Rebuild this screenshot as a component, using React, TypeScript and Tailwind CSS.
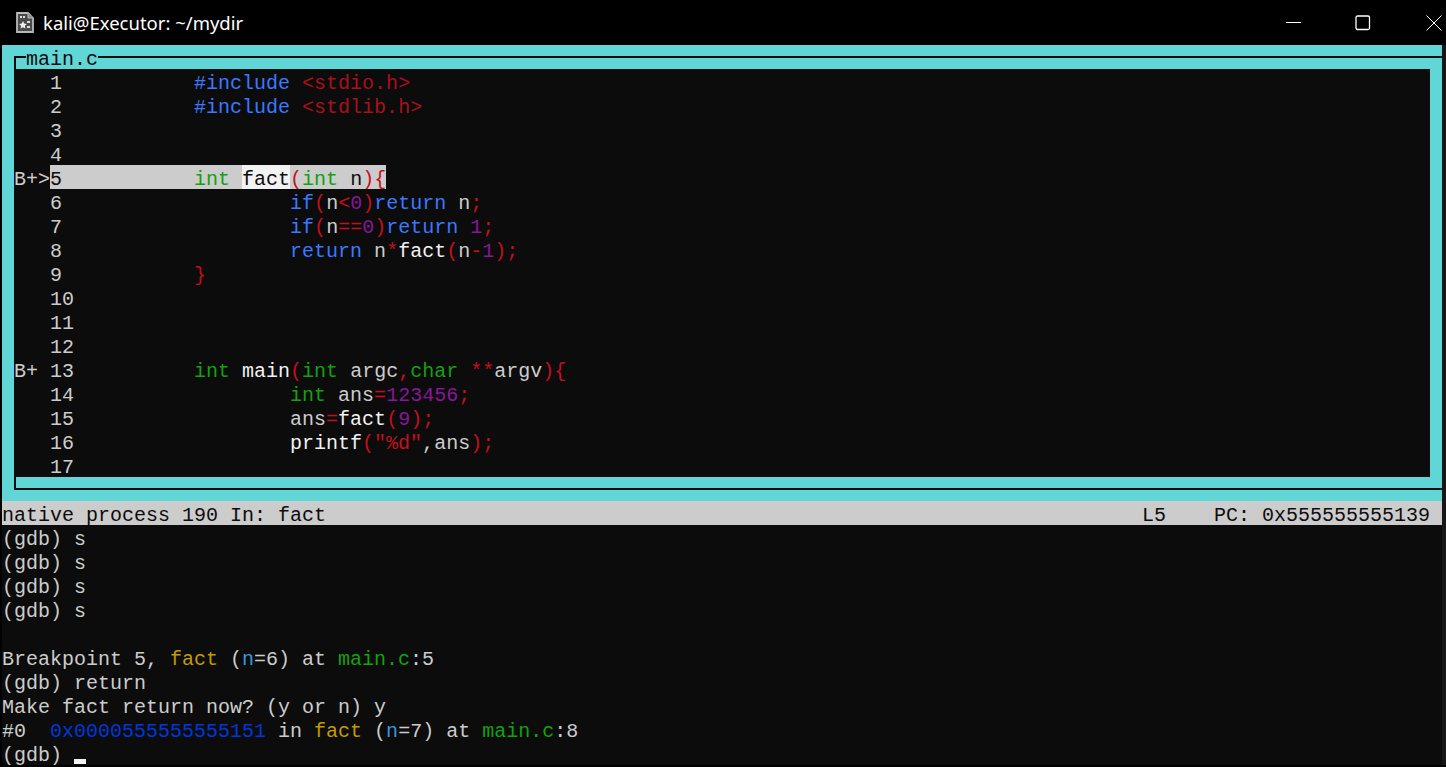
import React from 'react';

type Seg = [string, string];

const W = 'text-[#cccccc]';
const BRIGHT = 'text-[#f2f2f2]';
const BLUE = 'text-[#3b78ff]';
const RED = 'text-[#c50f1f]';
const DRED = 'text-[#a8101c]';
const GREEN = 'text-[#13a10e]';
const PURPLE = 'text-[#881798]';

const I1 = '          ';
const I2 = '                  ';

function Line({ prefix = '   ', num, segs = [] }: { prefix?: string; num: number; segs?: Seg[] }) {
  return (
    <div className="h-[24px] pt-[6px] leading-[18px] whitespace-pre">
      <span className={W}>{prefix}{num}{num < 10 ? ' ' : ''}</span>
      {segs.map((s, i) => (
        <span key={i} className={s[0]}>{s[1]}</span>
      ))}
    </div>
  );
}

function GdbLine({ segs }: { segs: Seg[] }) {
  return (
    <div className="h-[24px] pt-[6px] leading-[18px] whitespace-pre">
      {segs.map((s, i) => (
        <span key={i} className={s[0]}>{s[1]}</span>
      ))}
    </div>
  );
}

export default function App() {
  return (
    <div className="w-[1446px] h-[767px] bg-black flex flex-col">
      {/* title bar */}
      <div className="h-[45px] shrink-0 bg-black flex items-center pl-[16px] text-white font-['Noto_Sans',sans-serif]">
        <svg width="18" height="21" viewBox="0 0 18 21" className="shrink-0 mt-[-1px]">
          <path d="M1 1h11l5 5v14H1z" fill="#4a4a4a" stroke="#b8b8b8" strokeWidth="1.8" />
          <path d="M12 1v5h5" fill="#8a8a8a" stroke="#b8b8b8" strokeWidth="1" />
          <rect x="4" y="4" width="2" height="2" fill="#ddd" />
          <rect x="7" y="4" width="2" height="2" fill="#ddd" />
          <rect x="11" y="9" width="3" height="2" fill="#ddd" />
          <rect x="11" y="14" width="3" height="2" fill="#ddd" />
          <path d="M7 9l1.2 2.6 2.8.3-2.1 1.9.6 2.8L7 15.2l-2.5 1.4.6-2.8L3 11.9l2.8-.3z" fill="#eee" />
        </svg>
        <span className="ml-[9px] text-[18.5px] leading-[24px]">kali@Executor: ~/mydir</span>
        <div className="ml-auto flex items-center h-full">
          <svg width="16" height="16" viewBox="0 0 16 16" className="mr-[53px]">
            <path d="M0 7.5h15" stroke="#fff" strokeWidth="1" />
          </svg>
          <svg width="16" height="16" viewBox="0 0 16 16" className="mr-[55px]">
            <rect x="1" y="1" width="13.5" height="13.5" rx="1.5" fill="none" stroke="#fff" strokeWidth="1.3" />
          </svg>
          <svg width="16" height="16" viewBox="0 0 16 16" className="mr-[4px]">
            <path d="M.5.5l15 15M15.5.5l-15 15" stroke="#fff" strokeWidth="1" />
          </svg>
        </div>
      </div>

      {/* terminal */}
      <div className="h-[720px] shrink-0 flex bg-[#0c0c0c] rounded-bl-[8px] font-['Liberation_Mono',monospace] text-[20px]">
        <div className="w-[2px] bg-black shrink-0 rounded-bl-[8px]" />
        <div className="w-[1440px] shrink-0 flex flex-col">
          {/* tui box */}
          <div className="bg-[#61d6d6] h-[456px] flex flex-col">
            <div className="h-[24px] shrink-0 relative">
              <div className="absolute left-[12px] right-0 top-[11px] h-[2px] bg-[#0c0c0c]" />
              <div className="absolute left-[12px] top-[11px] bottom-0 w-[2px] bg-[#0c0c0c]" />
              <span className="absolute left-[24px] top-0 pt-[6px] leading-[18px] bg-[#61d6d6] text-[#0c0c0c] h-[24px] whitespace-pre">main.c</span>
            </div>
            <div className="ml-[12px] mr-[12px] h-[408px] bg-[#0c0c0c]">
              <Line num={1} segs={[[W, I1], [BLUE, '#include '], [DRED, '<stdio.h>']]} />
              <Line num={2} segs={[[W, I1], [BLUE, '#include '], [DRED, '<stdlib.h>']]} />
              <Line num={3} />
              <Line num={4} />
              <div className="h-[24px] flex whitespace-pre">
                <span className={`${W} h-[24px] pt-[6px] leading-[18px]`}>B+&gt;</span>
                <div className="h-[24px] pt-[6px] leading-[18px] bg-[#cccccc]">
                  <span className="text-[#0c0c0c]">5{'           '}</span>
                  <span className={GREEN}>int </span>
                </div>
                <span className="h-[24px] pt-[6px] leading-[18px] bg-[#f2f2f2] text-[#0c0c0c]">fact</span>
                <div className="h-[24px] pt-[6px] leading-[18px] bg-[#cccccc]">
                  <span className={RED}>(</span>
                  <span className={GREEN}>int </span>
                  <span className="text-[#0c0c0c]">n</span>
                  <span className={RED}>){'{'}</span>
                </div>
              </div>
              <Line num={6} segs={[[W, I2], [BLUE, 'if'], [RED, '('], [W, 'n'], [RED, '<'], [PURPLE, '0'], [RED, ')'], [BLUE, 'return '], [W, 'n'], [RED, ';']]} />
              <Line num={7} segs={[[W, I2], [BLUE, 'if'], [RED, '('], [W, 'n'], [RED, '=='], [PURPLE, '0'], [RED, ')'], [BLUE, 'return '], [PURPLE, '1'], [RED, ';']]} />
              <Line num={8} segs={[[W, I2], [BLUE, 'return '], [W, 'n'], [RED, '*'], [BRIGHT, 'fact'], [RED, '('], [W, 'n'], [RED, '-'], [PURPLE, '1'], [RED, ');']]} />
              <Line num={9} segs={[[W, I1], [RED, '}']]} />
              <Line num={10} />
              <Line num={11} />
              <Line num={12} />
              <Line prefix="B+ " num={13} segs={[[W, I1], [GREEN, 'int '], [BRIGHT, 'main'], [RED, '('], [GREEN, 'int '], [W, 'argc'], [RED, ','], [GREEN, 'char '], [RED, '**'], [W, 'argv'], [RED, '){']]} />
              <Line num={14} segs={[[W, I2], [GREEN, 'int '], [W, 'ans'], [RED, '='], [PURPLE, '123456'], [RED, ';']]} />
              <Line num={15} segs={[[W, I2], [W, 'ans'], [RED, '='], [BRIGHT, 'fact'], [RED, '('], [PURPLE, '9'], [RED, ');']]} />
              <Line num={16} segs={[[W, I2], [BRIGHT, 'printf'], [RED, '("%d"'], [W, ','], [W, 'ans'], [RED, ');']]} />
              <Line num={17} />
            </div>
            <div className="h-[11px] shrink-0 ml-[12px] border-l-2 border-[#0c0c0c]" />
            <div className="h-[2px] shrink-0 bg-[#0c0c0c] ml-[12px]" />
            <div className="h-[11px] shrink-0" />
          </div>

          {/* status line */}
          <div className="h-[24px] shrink-0 bg-[#cccccc] text-[#0c0c0c] pt-[6px] leading-[18px] flex justify-between whitespace-pre pr-[12px]">
            <span>native process 190 In: fact</span>
            <span>L5    PC: 0x555555555139</span>
          </div>

          {/* gdb command window */}
          <div className="flex-1">
            <GdbLine segs={[[W, '(gdb) s']]} />
            <GdbLine segs={[[W, '(gdb) s']]} />
            <GdbLine segs={[[W, '(gdb) s']]} />
            <GdbLine segs={[[W, '(gdb) s']]} />
            <GdbLine segs={[[W, ' ']]} />
            <GdbLine segs={[[W, 'Breakpoint 5, '], ['text-[#c19c00]', 'fact'], [W, ' ('], ['text-[#3a96dd]', 'n'], [W, '=6) at '], [GREEN, 'main.c'], [W, ':5']]} />
            <GdbLine segs={[[W, '(gdb) return']]} />
            <GdbLine segs={[[W, 'Make fact return now? (y or n) y']]} />
            <GdbLine segs={[[W, '#0  '], ['text-[#0037da]', '0x0000555555555151'], [W, ' in '], ['text-[#c19c00]', 'fact'], [W, ' ('], ['text-[#3a96dd]', 'n'], [W, '=7) at '], [GREEN, 'main.c'], [W, ':8']]} />
            <div className="h-[24px] pt-[6px] leading-[18px] whitespace-pre flex">
              <span className={W}>(gdb) </span>
              <span className="w-[12px] h-[5px] mt-[12px] bg-[#f2f2f2]" />
            </div>
          </div>
        </div>
        <div className="flex-1 bg-[#171717]" />
      </div>
    </div>
  );
}
